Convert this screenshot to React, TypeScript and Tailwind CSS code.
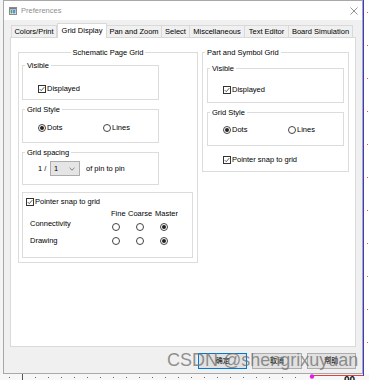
import type { ReactNode } from "react";

function Check() {
  return (
    <span className="flex h-[8px] w-[8px] shrink-0 items-center justify-center border border-[#333] bg-white">
      <svg viewBox="0 0 8 8" className="h-[6px] w-[6px]">
        <path d="M1 4.2 L3 6.2 L7 1.6" fill="none" stroke="#222" strokeWidth="1" />
      </svg>
    </span>
  );
}

function Radio({ on = false }: { on?: boolean }) {
  return (
    <span className="flex h-[8px] w-[8px] shrink-0 items-center justify-center rounded-full border border-[#444] bg-white">
      {on && <span className="h-[4px] w-[4px] rounded-full bg-[#222]" />}
    </span>
  );
}

function Box({
  title,
  className = "",
  center = false,
  children,
}: {
  title?: string;
  className?: string;
  center?: boolean;
  children?: ReactNode;
}) {
  return (
    <div className={`border border-[#dcdcdc] ${className}`}>
      {title && (
        <div
          className={`-mt-[6px] h-[11px] w-fit bg-white px-[2px] leading-[11px] ${center ? "mx-auto" : "ml-[2px]"}`}
        >
          {title}
        </div>
      )}
      {children}
    </div>
  );
}

const tabs = [
  { label: "Colors/Print", w: "w-[46px]" },
  { label: "Grid Display", w: "w-[50px]", on: true },
  { label: "Pan and Zoom", w: "w-[55px]" },
  { label: "Select", w: "w-[28px]" },
  { label: "Miscellaneous", w: "w-[55px]" },
  { label: "Text Editor", w: "w-[44px]" },
  { label: "Board Simulation", w: "w-[64px]" },
];

function StyleRow() {
  return (
    <div className="ml-[15px] flex h-[11px] items-center">
      <span className="flex w-[65px] items-center gap-[1px]">
        <Radio on />
        Dots
      </span>
      <span className="flex items-center gap-[1px]">
        <Radio />
        Lines
      </span>
    </div>
  );
}

export default function App() {
  return (
    <div className="relative flex h-[380px] w-[369px] flex-col overflow-hidden bg-[#f0f0f0] font-['Liberation_Sans',Arial,sans-serif] text-[7.5px] text-black">
      <div className="flex h-[374px]">
        <div className="w-[3px] bg-[#f4f4f4]" />
        <div className="flex w-[360px] flex-col border border-[#a8a8a8] bg-[#f0f0f0]">
          {/* title bar */}
          <div className="flex h-[19px] items-center bg-white">
            <svg width="8" height="8" viewBox="0 0 8 8" className="ml-[5px]">
              <rect x="0.5" y="0.5" width="7" height="7" fill="#fff" stroke="#8a8a8a" />
              <rect x="1" y="1" width="6" height="1.5" fill="#6d7f8f" />
              <rect x="1.5" y="3" width="2" height="3.5" fill="#4aa36a" />
              <rect x="4" y="3" width="2.5" height="3.5" fill="#5b8fd0" />
            </svg>
            <span className="ml-[4px] text-[#8f8f8f]">Preferences</span>
            <svg width="8" height="8" viewBox="0 0 8 8" className="ml-auto mr-[4px]">
              <path d="M0.5 0.5 L7.5 7.5 M7.5 0.5 L0.5 7.5" stroke="#7a7a7a" strokeWidth="0.8" />
            </svg>
          </div>

          <div className="flex flex-1 flex-col px-[6px] pt-[2px]">
            {/* tabs */}
            <div className="ml-[1px] flex h-[15px] items-end">
              {tabs.map((t, i) =>
                t.on ? (
                  <div
                    key={t.label}
                    className={`relative z-10 -mb-px flex h-[15px] items-center justify-center border-x border-t border-[#d9d9d9] bg-white ${t.w}`}
                  >
                    {t.label}
                  </div>
                ) : (
                  <div
                    key={t.label}
                    className={`flex h-[12px] items-center justify-center border-t border-r border-[#d9d9d9] bg-[#f0f0f0] ${i === 0 ? "border-l" : ""} ${t.w}`}
                  >
                    {t.label}
                  </div>
                ),
              )}
            </div>

            {/* panel */}
            <div className="flex h-[310px] items-start gap-[4px] border border-[#d9d9d9] bg-white pl-[7px] pt-[14px]">
              <Box title="Schematic Page Grid" center className="h-[211px] w-[180px]">
                <div className="ml-[3px] mt-[7px] flex flex-col">
                  <Box title="Visible" className="h-[35px] w-[137px]">
                    <div className="ml-[15px] mt-[12px] flex h-[11px] items-center gap-[1px]">
                      <Check />
                      Displayed
                    </div>
                  </Box>
                  <Box title="Grid Style" className="mt-[9px] h-[34px] w-[137px]">
                    <div className="mt-[7px]">
                      <StyleRow />
                    </div>
                  </Box>
                  <Box title="Grid spacing" className="mt-[9px] h-[33px] w-[137px]">
                    <div className="ml-[15px] mt-[3px] flex h-[15px] items-center">
                      <span className="w-[12px]">1 /</span>
                      <div className="flex h-[15px] w-[30px] items-center border border-[#adadad] bg-[#e5e5e5] pl-[3px]">
                        <span>1</span>
                        <svg width="6" height="4" viewBox="0 0 6 4" className="ml-auto mr-[4px]">
                          <path d="M0.5 0.8 L3 3.2 L5.5 0.8" fill="none" stroke="#666" strokeWidth="0.8" />
                        </svg>
                      </div>
                      <span className="ml-[6px]">of pin to pin</span>
                    </div>
                  </Box>
                  <Box className="mt-[7px] h-[66px] w-[171px]">
                    <div className="ml-[3px] mt-[3px] flex h-[11px] items-center gap-[1px]">
                      <Check />
                      Pointer snap to grid
                    </div>
                    <div className="ml-[88px] mt-[1px] flex h-[11px] items-center overflow-hidden whitespace-nowrap">
                      <span className="w-[17px] shrink-0">Fine</span>
                      <span className="w-[27px] shrink-0">Coarse</span>
                      <span className="w-[23px] shrink-0 overflow-hidden">Master</span>
                    </div>
                    <div className="ml-[7px] mt-[2px] flex h-[11px] items-center gap-[16px]">
                      <span className="mb-[5px] w-[66px]">Connectivity</span>
                      <Radio />
                      <Radio />
                      <Radio on />
                    </div>
                    <div className="ml-[7px] mt-[3px] flex h-[11px] items-center gap-[16px]">
                      <span className="w-[66px]">Drawing</span>
                      <Radio />
                      <Radio />
                      <Radio on />
                    </div>
                  </Box>
                </div>
              </Box>

              <Box title="Part and Symbol Grid" className="h-[120px] w-[147px]">
                <div className="ml-[4px] mt-[10px] flex flex-col">
                  <Box title="Visible" className="h-[35px] w-[137px]">
                    <div className="ml-[15px] mt-[10px] flex h-[11px] items-center gap-[1px]">
                      <Check />
                      Displayed
                    </div>
                  </Box>
                  <Box title="Grid Style" className="mt-[9px] h-[34px] w-[137px]">
                    <div className="mt-[6px]">
                      <StyleRow />
                    </div>
                  </Box>
                  <div className="ml-[16px] mt-[8px] flex h-[11px] items-center gap-[1px]">
                    <Check />
                    Pointer snap to grid
                  </div>
                </div>
              </Box>
            </div>

            {/* buttons */}
            <div className="mt-[6px] flex gap-[5px] pl-[188px] font-['Liberation_Sans','Noto_Sans_CJK_SC',sans-serif] text-[7px]">
              <button className="h-[16px] w-[50px] border border-[#0078d7] bg-[#e1e1e1]">确定</button>
              <button className="h-[16px] w-[50px] border border-[#adadad] bg-[#e1e1e1]">取消</button>
              <button className="h-[16px] w-[50px] border border-[#adadad] bg-[#e1e1e1]">帮助</button>
            </div>
          </div>
        </div>

        {/* canvas strip on the right */}
        <svg width="6" height="374" viewBox="0 0 6 374" className="bg-white">
          <line x1="0.5" y1="0" x2="0.5" y2="374" stroke="#3a3ad0" strokeWidth="1" />
          {[12, 45, 78, 111, 144, 177, 210, 243, 276, 309, 342].map((y) => (
            <rect key={y} x="4" y={y} width="1" height="1" fill="#e05050" />
          ))}
        </svg>
      </div>

      {/* canvas strip below */}
      <svg width="369" height="6" viewBox="0 0 369 6" className="bg-[#f7f7f7]">
        {[9, 35, 48, 61, 74, 87, 100, 113, 126, 139, 152, 165, 178, 191, 204, 217, 230, 243, 256, 269, 282, 295].map(
          (x) => (
            <rect key={x} x={x} y="3" width="1" height="1" fill="#666" />
          ),
        )}
        <line x1="22.5" y1="0" x2="22.5" y2="6" stroke="#555" strokeWidth="1" />
        <line x1="312" y1="1.5" x2="363" y2="1.5" stroke="#e04040" strokeWidth="1" />
        <line x1="363.5" y1="0" x2="363.5" y2="2" stroke="#3a3ad0" strokeWidth="1" />
        <circle cx="312" cy="2.5" r="2.2" fill="#e020e0" />
        <text x="344" y="10" fontSize="10" fontWeight="bold" fill="#111" fontFamily="Liberation Sans">
          00
        </text>
      </svg>

      {/* watermark */}
      <div className="pointer-events-none absolute left-[167px] top-[351px] whitespace-nowrap text-[18px] leading-none text-[#6f6f6f]/75">
        CSDN @shengrixuyuan
      </div>
    </div>
  );
}
